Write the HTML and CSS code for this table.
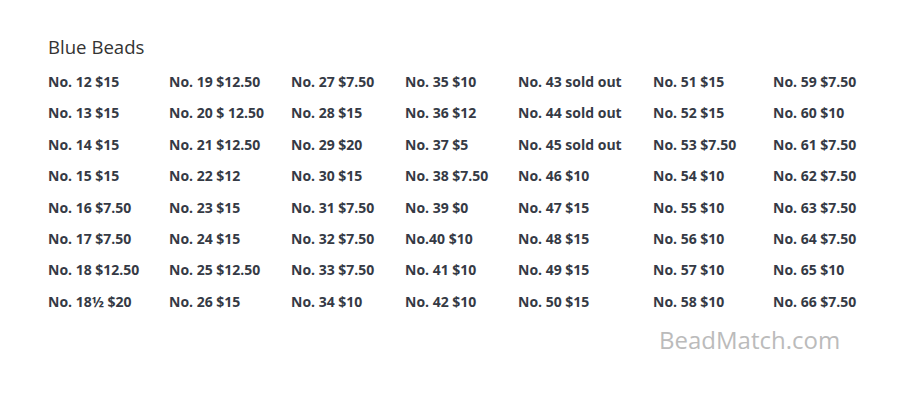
FILE: index.html
```html
<!DOCTYPE html>
<html>
<head>
<meta charset="utf-8">
<link rel="stylesheet" href="styles.css">
</head>
<body>
<div class="page">
  <h1 class="title">Blue Beads</h1>
  <div class="grid">
    <div>No. 12 $15</div><div>No. 19 $12.50</div><div>No. 27 $7.50</div><div>No. 35 $10</div><div>No. 43 sold out</div><div>No. 51 $15</div><div>No. 59 $7.50</div>
    <div>No. 13 $15</div><div>No. 20 $ 12.50</div><div>No. 28 $15</div><div>No. 36 $12</div><div>No. 44 sold out</div><div>No. 52 $15</div><div>No. 60 $10</div>
    <div>No. 14 $15</div><div>No. 21 $12.50</div><div>No. 29 $20</div><div>No. 37 $5</div><div>No. 45 sold out</div><div>No. 53 $7.50</div><div>No. 61 $7.50</div>
    <div>No. 15 $15</div><div>No. 22 $12</div><div>No. 30 $15</div><div>No. 38 $7.50</div><div>No. 46 $10</div><div>No. 54 $10</div><div>No. 62 $7.50</div>
    <div>No. 16 $7.50</div><div>No. 23 $15</div><div>No. 31 $7.50</div><div>No. 39 $0</div><div>No. 47 $15</div><div>No. 55 $10</div><div>No. 63 $7.50</div>
    <div>No. 17 $7.50</div><div>No. 24 $15</div><div>No. 32 $7.50</div><div>No.40 $10</div><div>No. 48 $15</div><div>No. 56 $10</div><div>No. 64 $7.50</div>
    <div>No. 18 $12.50</div><div>No. 25 $12.50</div><div>No. 33 $7.50</div><div>No. 41 $10</div><div>No. 49 $15</div><div>No. 57 $10</div><div>No. 65 $10</div>
    <div>No. 18½ $20</div><div>No. 26 $15</div><div>No. 34 $10</div><div>No. 42 $10</div><div>No. 50 $15</div><div>No. 58 $10</div><div>No. 66 $7.50</div>
  </div>
  <div class="brand">BeadMatch.com</div>
</div>
</body>
</html>
```
FILE: styles.css
```css
html, body {
  margin: 0;
  padding: 0;
  background: #ffffff;
}
.page {
  width: 900px;
  height: 400px;
  padding: 35px 0 0 48px;
  box-sizing: border-box;
  font-family: "Open Sans", "DejaVu Sans", sans-serif;
  color: #353a45;
}
.title {
  margin: 0;
  font-size: 18.6px;
  font-weight: 400;
  line-height: 24px;
  color: #333;
}
.grid {
  margin-top: 13px;
  display: grid;
  grid-template-columns: 121px 122px 114px 113px 135px 120px 100px;
  grid-auto-rows: 31.4px;
  font-size: 14px;
  font-weight: 700;
  line-height: 19px;
  white-space: nowrap;
}
.brand {
  margin: 2px 0 0 611px;
  font-size: 24px;
  color: #bbbbbb;
  line-height: 30px;
}
```
